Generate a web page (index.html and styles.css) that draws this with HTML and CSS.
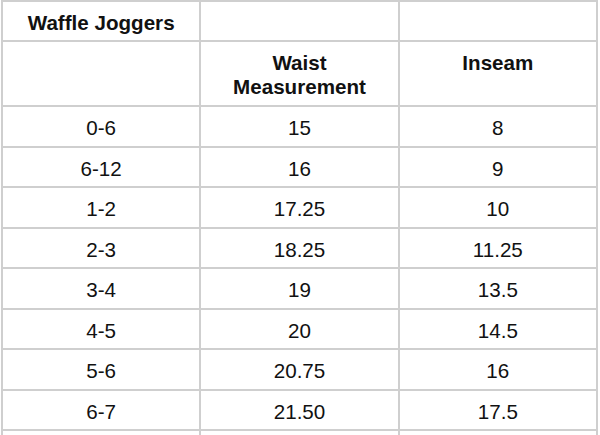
FILE: index.html
```html
<!DOCTYPE html>
<html>
<head>
<meta charset="utf-8">
<link rel="stylesheet" href="styles.css">
</head>
<body>
<table class="size-table">
  <colgroup><col class="c"><col class="c"><col class="c"></colgroup>
  <tr class="r-title"><th>Waffle Joggers</th><th></th><th></th></tr>
  <tr class="r-head"><th></th><th>Waist<br>Measurement</th><th>Inseam</th></tr>
  <tr class="r"><td>0-6</td><td>15</td><td>8</td></tr>
  <tr class="r"><td>6-12</td><td>16</td><td>9</td></tr>
  <tr class="r"><td>1-2</td><td>17.25</td><td>10</td></tr>
  <tr class="r"><td>2-3</td><td>18.25</td><td>11.25</td></tr>
  <tr class="r"><td>3-4</td><td>19</td><td>13.5</td></tr>
  <tr class="r"><td>4-5</td><td>20</td><td>14.5</td></tr>
  <tr class="r"><td>5-6</td><td>20.75</td><td>16</td></tr>
  <tr class="r"><td>6-7</td><td>21.50</td><td>17.5</td></tr>
  <tr class="r"><td></td><td></td><td></td></tr>
</table>
</body>
</html>
```
FILE: styles.css
```css
html, body {
  margin: 0;
  padding: 0;
  background: #fff;
  overflow: hidden;
}
body {
  font-family: "Liberation Sans", Arial, sans-serif;
  color: #111;
}
.size-table {
  border-collapse: collapse;
  table-layout: fixed;
  width: 597px;
  margin-left: 1px;
}
.size-table th,
.size-table td {
  border: 2px solid #cfcfcf;
  padding: 9px 4px 0;
  vertical-align: top;
  text-align: center;
  font-size: 20.6px;
  line-height: 24px;
}
.size-table th {
  font-weight: bold;
}
.size-table td {
  font-weight: normal;
}
.r-title { height: 40px; }
.r-head { height: 65px; }
.r { height: 40.5px; }
```
